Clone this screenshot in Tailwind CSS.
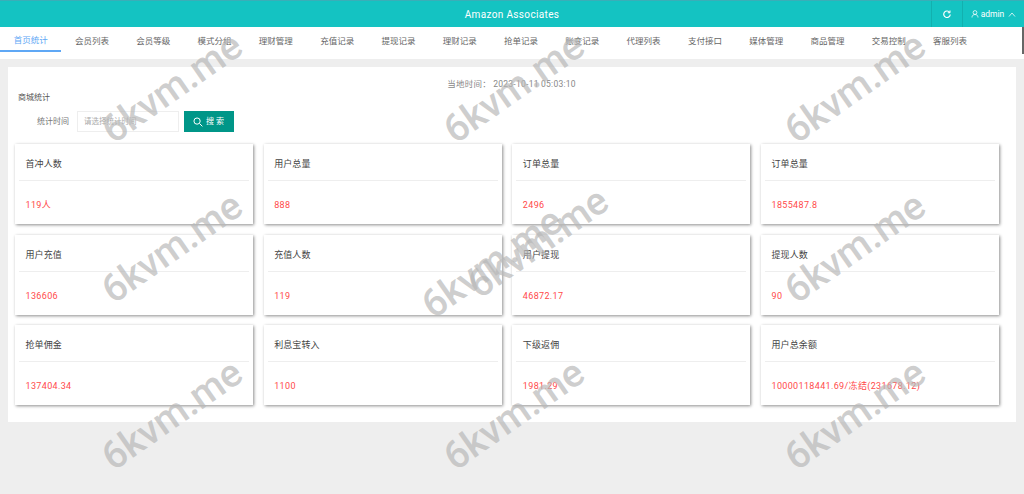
<!DOCTYPE html>
<html lang="en">
<head>
    <meta charset="UTF-8">
    <title>Amazon Associates</title>
    <script src="https://cdn.jsdelivr.net/npm/@tailwindcss/browser@4"></script>
</head>
<body class="relative h-[494px] w-[1024px] overflow-hidden bg-[#eeeeee] font-['Roboto','Noto_Sans_CJK_SC',sans-serif] text-[8.5px] text-[#555555]">
    <!-- top bar -->
    <header class="relative flex h-[27px] items-center justify-end border-t border-[#3aaeb8] bg-[#14c3c2] text-white">
        <div class="absolute inset-x-0 text-center text-[10px] tracking-[0.35px]">Amazon Associates</div>
        <div class="relative flex h-full w-[31px] items-center justify-center border-l border-[#12b0af]">
            <svg class="h-[8px] w-[8px]" viewBox="0 0 16 16" fill="none" stroke="white" stroke-width="2.4"><path d="M13.5 5A6.5 6.5 0 1 0 14.5 9"/><path d="M14 1v4.5H9.5" stroke-width="2"/></svg>
        </div>
        <div class="relative flex h-full w-[62px] items-center justify-center gap-[2px] border-l border-[#12b0af] text-[8.5px]">
            <svg class="h-[8px] w-[8px]" viewBox="0 0 16 16" fill="none" stroke="white" stroke-width="1.5"><circle cx="8" cy="5" r="3.8"/><path d="M2 15c0-4 2.5-6 6-6s6 2 6 6"/></svg>
            <span>admin</span>
            <svg class="ml-[2px] h-[7px] w-[8px]" viewBox="0 0 16 14" fill="none" stroke="white" stroke-width="1.5"><path d="M2 11l6-7 6 7"/></svg>
        </div>
    </header>

    <!-- tabs -->
    <nav class="relative flex h-[32px] bg-white text-[#666666]">
        <a class="flex h-[25px] w-[61.3px] items-center justify-center border-b-2 border-[#5fa8f5] pt-[4px] text-[#5fa8f5]">首页统计</a>
        <a class="flex h-[25px] w-[61.3px] items-center justify-center pt-[4px]">会员列表</a>
        <a class="flex h-[25px] w-[61.3px] items-center justify-center pt-[4px]">会员等级</a>
        <a class="flex h-[25px] w-[61.3px] items-center justify-center pt-[4px]">模式分组</a>
        <a class="flex h-[25px] w-[61.3px] items-center justify-center pt-[4px]">理财管理</a>
        <a class="flex h-[25px] w-[61.3px] items-center justify-center pt-[4px]">充值记录</a>
        <a class="flex h-[25px] w-[61.3px] items-center justify-center pt-[4px]">提现记录</a>
        <a class="flex h-[25px] w-[61.3px] items-center justify-center pt-[4px]">理财记录</a>
        <a class="flex h-[25px] w-[61.3px] items-center justify-center pt-[4px]">抢单记录</a>
        <a class="flex h-[25px] w-[61.3px] items-center justify-center pt-[4px]">账变记录</a>
        <a class="flex h-[25px] w-[61.3px] items-center justify-center pt-[4px]">代理列表</a>
        <a class="flex h-[25px] w-[61.3px] items-center justify-center pt-[4px]">支付接口</a>
        <a class="flex h-[25px] w-[61.3px] items-center justify-center pt-[4px]">媒体管理</a>
        <a class="flex h-[25px] w-[61.3px] items-center justify-center pt-[4px]">商品管理</a>
        <a class="flex h-[25px] w-[61.3px] items-center justify-center pt-[4px]">交易控制</a>
        <a class="flex h-[25px] w-[61.3px] items-center justify-center pt-[4px]">客服列表</a>
        <div class="absolute right-0 top-0 h-[27px] w-[2px] bg-[#666666]"></div>
    </nav>

    <!-- panel -->
    <main class="mx-[8px] mt-[8px] h-[355px] bg-white pl-[7px] pr-[17px] pt-[11px]">
        <p class="ml-[9px] text-center text-[8.5px] leading-[12px] tracking-[0.25px] text-[#888888]">当地时间： 2023-10-11 05:03:10</p>
        <p class="ml-[3px] mt-[2px] text-[8px] leading-[12px]">商城统计</p>
        <div class="mt-[7px] flex items-center">
            <label class="w-[62px] whitespace-nowrap pl-[22px] text-[8px] text-[#777777]">统计时间</label>
            <div class="flex h-[21px] w-[102px] items-center border border-[#eeeeee] pl-[6px] text-[7.5px] text-[#aaaaaa]">请选择统计时间</div>
            <button class="ml-[5px] flex h-[21px] w-[50px] items-center justify-center gap-[3px] bg-[#009688] pl-[1px] text-[8px] text-white">
                <svg class="h-[10px] w-[10px]" viewBox="0 0 16 16" fill="none" stroke="white" stroke-width="1.6"><circle cx="6.5" cy="6.5" r="5"/><path d="M10.5 10.5L15 15"/></svg>
                <span class="tracking-[2px]">搜索</span>
            </button>
        </div>

        <div class="mt-[12px] grid grid-cols-4 gap-x-[10.67px] gap-y-[10.5px]">
            <div class="h-[80px] bg-white px-[4px] shadow-[1px_1px_3px_rgba(0,0,0,0.45)]">
                <div class="flex h-[37px] items-center border-b border-[#eeeeee] px-[6.5px] pt-[6px] text-[9px] tracking-[0.1px] text-[#444444]">首冲人数</div>
                <div class="flex h-[46px] items-center px-[6.5px] pt-[4px] text-[9px] tracking-[0.35px] text-[#ff4a4a]">119人</div>
            </div>
            <div class="h-[80px] bg-white px-[4px] shadow-[1px_1px_3px_rgba(0,0,0,0.45)]">
                <div class="flex h-[37px] items-center border-b border-[#eeeeee] px-[6.5px] pt-[6px] text-[9px] tracking-[0.1px] text-[#444444]">用户总量</div>
                <div class="flex h-[46px] items-center px-[6.5px] pt-[4px] text-[9px] tracking-[0.35px] text-[#ff4a4a]">888</div>
            </div>
            <div class="h-[80px] bg-white px-[4px] shadow-[1px_1px_3px_rgba(0,0,0,0.45)]">
                <div class="flex h-[37px] items-center border-b border-[#eeeeee] px-[6.5px] pt-[6px] text-[9px] tracking-[0.1px] text-[#444444]">订单总量</div>
                <div class="flex h-[46px] items-center px-[6.5px] pt-[4px] text-[9px] tracking-[0.35px] text-[#ff4a4a]">2496</div>
            </div>
            <div class="h-[80px] bg-white px-[4px] shadow-[1px_1px_3px_rgba(0,0,0,0.45)]">
                <div class="flex h-[37px] items-center border-b border-[#eeeeee] px-[6.5px] pt-[6px] text-[9px] tracking-[0.1px] text-[#444444]">订单总量</div>
                <div class="flex h-[46px] items-center px-[6.5px] pt-[4px] text-[9px] tracking-[0.35px] text-[#ff4a4a]">1855487.8</div>
            </div>
            <div class="h-[80px] bg-white px-[4px] shadow-[1px_1px_3px_rgba(0,0,0,0.45)]">
                <div class="flex h-[37px] items-center border-b border-[#eeeeee] px-[6.5px] pt-[6px] text-[9px] tracking-[0.1px] text-[#444444]">用户充值</div>
                <div class="flex h-[46px] items-center px-[6.5px] pt-[4px] text-[9px] tracking-[0.35px] text-[#ff4a4a]">136606</div>
            </div>
            <div class="h-[80px] bg-white px-[4px] shadow-[1px_1px_3px_rgba(0,0,0,0.45)]">
                <div class="flex h-[37px] items-center border-b border-[#eeeeee] px-[6.5px] pt-[6px] text-[9px] tracking-[0.1px] text-[#444444]">充值人数</div>
                <div class="flex h-[46px] items-center px-[6.5px] pt-[4px] text-[9px] tracking-[0.35px] text-[#ff4a4a]">119</div>
            </div>
            <div class="h-[80px] bg-white px-[4px] shadow-[1px_1px_3px_rgba(0,0,0,0.45)]">
                <div class="flex h-[37px] items-center border-b border-[#eeeeee] px-[6.5px] pt-[6px] text-[9px] tracking-[0.1px] text-[#444444]">用户提现</div>
                <div class="flex h-[46px] items-center px-[6.5px] pt-[4px] text-[9px] tracking-[0.35px] text-[#ff4a4a]">46872.17</div>
            </div>
            <div class="h-[80px] bg-white px-[4px] shadow-[1px_1px_3px_rgba(0,0,0,0.45)]">
                <div class="flex h-[37px] items-center border-b border-[#eeeeee] px-[6.5px] pt-[6px] text-[9px] tracking-[0.1px] text-[#444444]">提现人数</div>
                <div class="flex h-[46px] items-center px-[6.5px] pt-[4px] text-[9px] tracking-[0.35px] text-[#ff4a4a]">90</div>
            </div>
            <div class="h-[80px] bg-white px-[4px] shadow-[1px_1px_3px_rgba(0,0,0,0.45)]">
                <div class="flex h-[37px] items-center border-b border-[#eeeeee] px-[6.5px] pt-[6px] text-[9px] tracking-[0.1px] text-[#444444]">抢单佣金</div>
                <div class="flex h-[46px] items-center px-[6.5px] pt-[4px] text-[9px] tracking-[0.35px] text-[#ff4a4a]">137404.34</div>
            </div>
            <div class="h-[80px] bg-white px-[4px] shadow-[1px_1px_3px_rgba(0,0,0,0.45)]">
                <div class="flex h-[37px] items-center border-b border-[#eeeeee] px-[6.5px] pt-[6px] text-[9px] tracking-[0.1px] text-[#444444]">利息宝转入</div>
                <div class="flex h-[46px] items-center px-[6.5px] pt-[4px] text-[9px] tracking-[0.35px] text-[#ff4a4a]">1100</div>
            </div>
            <div class="h-[80px] bg-white px-[4px] shadow-[1px_1px_3px_rgba(0,0,0,0.45)]">
                <div class="flex h-[37px] items-center border-b border-[#eeeeee] px-[6.5px] pt-[6px] text-[9px] tracking-[0.1px] text-[#444444]">下级返佣</div>
                <div class="flex h-[46px] items-center px-[6.5px] pt-[4px] text-[9px] tracking-[0.35px] text-[#ff4a4a]">1981.29</div>
            </div>
            <div class="h-[80px] bg-white px-[4px] shadow-[1px_1px_3px_rgba(0,0,0,0.45)]">
                <div class="flex h-[37px] items-center border-b border-[#eeeeee] px-[6.5px] pt-[6px] text-[9px] tracking-[0.1px] text-[#444444]">用户总余额</div>
                <div class="flex h-[46px] items-center px-[6.5px] pt-[4px] text-[9px] tracking-[0.35px] text-[#ff4a4a]">10000118441.69/冻结(231678.12)</div>
            </div>
        </div>
    </main>

    <!-- watermark overlay -->
    <div class="pointer-events-none absolute inset-0 font-['Roboto',sans-serif] text-[39px] font-medium text-[#b8b8b8]/70">
        <span class="absolute left-[172px] top-[88px] -translate-x-1/2 -translate-y-1/2 -rotate-[35deg] whitespace-nowrap">6kvm.me</span>
        <span class="absolute left-[514px] top-[88px] -translate-x-1/2 -translate-y-1/2 -rotate-[35deg] whitespace-nowrap">6kvm.me</span>
        <span class="absolute left-[855px] top-[88px] -translate-x-1/2 -translate-y-1/2 -rotate-[35deg] whitespace-nowrap">6kvm.me</span>
        <span class="absolute left-[172px] top-[248px] -translate-x-1/2 -translate-y-1/2 -rotate-[35deg] whitespace-nowrap">6kvm.me</span>
        <span class="absolute left-[492px] top-[263px] -translate-x-1/2 -translate-y-1/2 -rotate-[35deg] whitespace-nowrap">6kvm.me</span>
        <span class="absolute left-[538px] top-[243px] -translate-x-1/2 -translate-y-1/2 -rotate-[35deg] whitespace-nowrap">6kvm.me</span>
        <span class="absolute left-[855px] top-[248px] -translate-x-1/2 -translate-y-1/2 -rotate-[35deg] whitespace-nowrap">6kvm.me</span>
        <span class="absolute left-[172px] top-[415px] -translate-x-1/2 -translate-y-1/2 -rotate-[35deg] whitespace-nowrap">6kvm.me</span>
        <span class="absolute left-[514px] top-[415px] -translate-x-1/2 -translate-y-1/2 -rotate-[35deg] whitespace-nowrap">6kvm.me</span>
        <span class="absolute left-[855px] top-[415px] -translate-x-1/2 -translate-y-1/2 -rotate-[35deg] whitespace-nowrap">6kvm.me</span>
    </div>
</body>
</html>
